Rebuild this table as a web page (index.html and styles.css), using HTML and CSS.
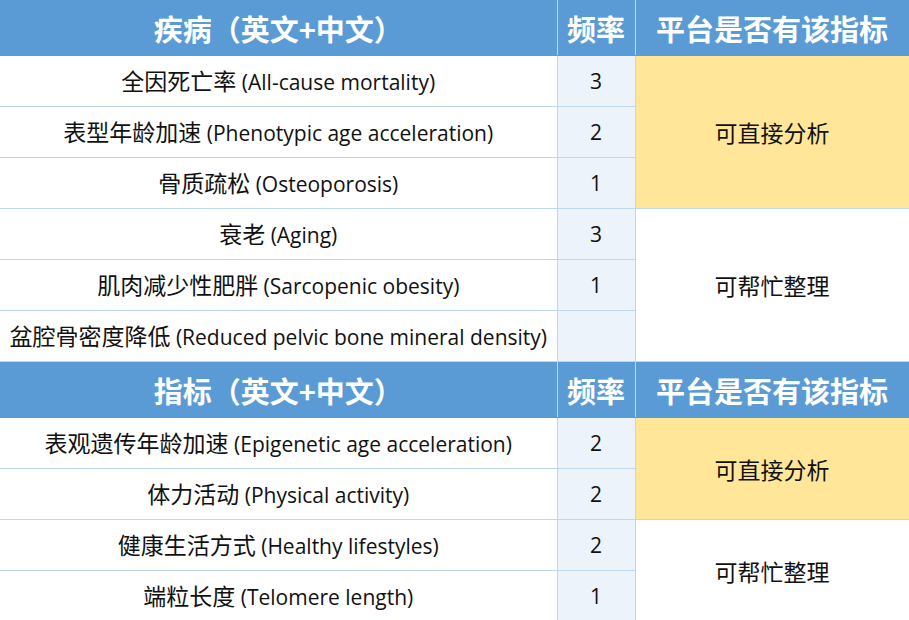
FILE: index.html
```html
<!DOCTYPE html>
<html lang="zh-CN">
<head>
<meta charset="utf-8">
<title>疾病与指标</title>
<link rel="stylesheet" href="styles.css">
</head>
<body>
<table class="grid">
  <colgroup>
    <col class="c-name">
    <col class="c-freq">
    <col class="c-plat">
  </colgroup>
  <tbody>
    <tr class="head">
      <th>疾病（英文+中文）</th>
      <th>频率</th>
      <th>平台是否有该指标</th>
    </tr>
    <tr>
      <td class="name"><span class="zh">全因死亡率</span> (All-cause mortality)</td>
      <td class="freq">3</td>
      <td class="plat yes" rowspan="3">可直接分析</td>
    </tr>
    <tr>
      <td class="name"><span class="zh">表型年龄加速</span> (Phenotypic age acceleration)</td>
      <td class="freq">2</td>
    </tr>
    <tr>
      <td class="name"><span class="zh">骨质疏松</span> (Osteoporosis)</td>
      <td class="freq">1</td>
    </tr>
    <tr>
      <td class="name"><span class="zh">衰老</span> (Aging)</td>
      <td class="freq">3</td>
      <td class="plat" rowspan="3">可帮忙整理</td>
    </tr>
    <tr>
      <td class="name"><span class="zh">肌肉减少性肥胖</span> (Sarcopenic obesity)</td>
      <td class="freq">1</td>
    </tr>
    <tr>
      <td class="name"><span class="zh">盆腔骨密度降低</span> (Reduced pelvic bone mineral density)</td>
      <td class="freq"></td>
    </tr>
    <tr class="head">
      <th>指标（英文+中文）</th>
      <th>频率</th>
      <th>平台是否有该指标</th>
    </tr>
    <tr>
      <td class="name"><span class="zh">表观遗传年龄加速</span> (Epigenetic age acceleration)</td>
      <td class="freq">2</td>
      <td class="plat yes" rowspan="2">可直接分析</td>
    </tr>
    <tr>
      <td class="name"><span class="zh">体力活动</span> (Physical activity)</td>
      <td class="freq">2</td>
    </tr>
    <tr>
      <td class="name"><span class="zh">健康生活方式</span> (Healthy lifestyles)</td>
      <td class="freq">2</td>
      <td class="plat" rowspan="2">可帮忙整理</td>
    </tr>
    <tr>
      <td class="name"><span class="zh">端粒长度</span> (Telomere length)</td>
      <td class="freq">1</td>
    </tr>
  </tbody>
</table>
</body>
</html>
```

FILE: styles.css
```css
html, body {
  margin: 0;
  padding: 0;
  background: #ffffff;
}

body {
  width: 909px;
  height: 620px;
  overflow: hidden;
  font-family: "Open Sans", "Noto Sans CJK SC", sans-serif;
  color: #111111;
}

.grid {
  width: 909px;
  border-collapse: collapse;
  table-layout: fixed;
}

.c-name { width: 557px; }
.c-freq { width: 78px; }
.c-plat { width: 274px; }

.grid td {
  height: 50px;
  padding: 0;
  border: 1px solid #bdd7ee;
  text-align: center;
  vertical-align: middle;
  font-size: 21px;
  line-height: 26px;
  white-space: nowrap;
}

.zh {
  font-family: "Noto Sans CJK SC", sans-serif;
  font-size: 23px;
}

.grid tr:first-child th,
.grid tr:first-child td {
  border-top: none;
}

.grid td:first-child,
.grid th:first-child {
  border-left: none;
}

.head th {
  height: 55px;
  padding: 0;
  background: #5b9bd5;
  color: #ffffff;
  font-family: "Noto Sans CJK SC", sans-serif;
  font-weight: 700;
  font-size: 29px;
  line-height: 34px;
  text-align: center;
  vertical-align: middle;
  border: 1px solid #bdd7ee;
  border-top-color: #5b9bd5;
  border-bottom-color: #5b9bd5;
  white-space: nowrap;
}

.freq {
  background: #ecf3fb;
}

.grid td.plat {
  background: #ffffff;
  font-family: "Noto Sans CJK SC", sans-serif;
  font-size: 23px;
}

.grid td.plat.yes {
  background: #ffe699;
}
```
